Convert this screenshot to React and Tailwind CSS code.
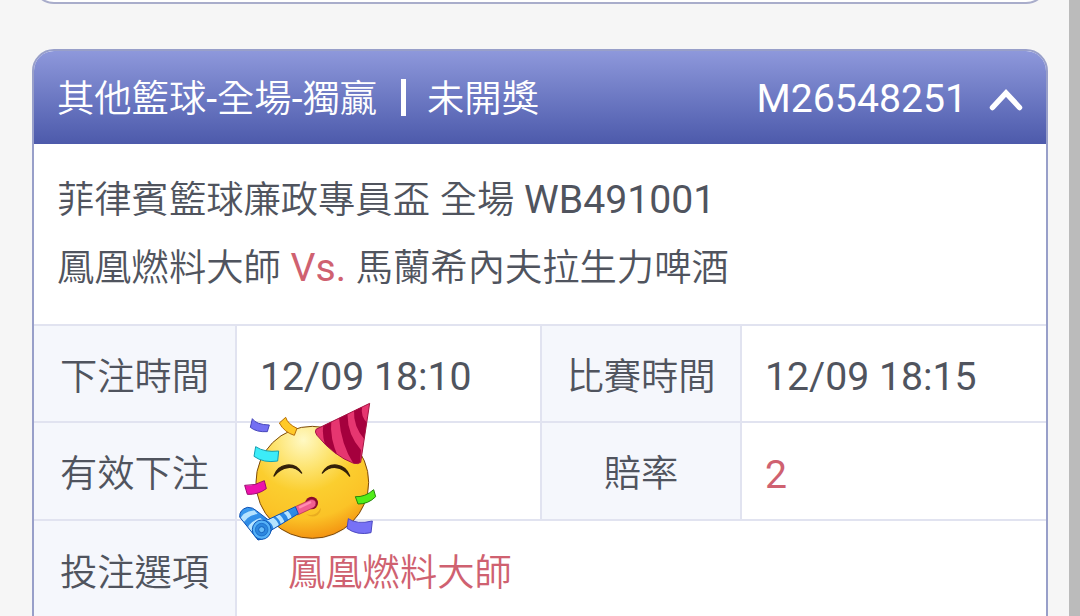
import clsx from 'clsx';

function Latin({ children }) {
  return <span className="text-[39.2px] font-normal">{children}</span>;
}

function LabelCell({ children, className = '' }) {
  return (
    <div className={clsx('flex items-center justify-center bg-[#f5f7fc] border-r-2 border-[#e1e3f0] pt-2', className)}>
      {children}
    </div>
  );
}

function PartyFace() {
  return (
    <svg className="absolute -left-3 -top-7 z-10 w-[165px] h-[155px] max-w-none" viewBox="0 0 495 465">
      <defs>
        <radialGradient id="face" cx="0.42" cy="0.12" r="0.9">
          <stop offset="0" stopColor="#fff9c4" />
          <stop offset="0.28" stopColor="#fde471" />
          <stop offset="0.52" stopColor="#fbce2f" />
          <stop offset="0.78" stopColor="#fbc327" />
          <stop offset="1" stopColor="#f3900f" />
        </radialGradient>
        <linearGradient id="horn" x1="0" y1="0" x2="0.5" y2="1">
          <stop offset="0" stopColor="#3fa2f5" />
          <stop offset="1" stopColor="#1d74d6" />
        </linearGradient>
        <clipPath id="hatClip">
          <path d="M434 25 L273 103 Q268 111 276 121 Q327 183 386 205 Q400 208 407 202 Z" />
        </clipPath>
        <clipPath id="hornClip">
          <path d="M44 366 Q43 343 68 337 Q84 337 94 347 L129 374 L211 335 L220 356 L140 405 Q128 432 99 435 Z" />
        </clipPath>
      </defs>
      <ellipse cx="263" cy="266" rx="168" ry="167" fill="#8a6a20" opacity="0.15" />
      <ellipse cx="262" cy="262" rx="169" ry="168" fill="url(#face)" stroke="#7d4a0b" strokeWidth="3" />
      {/* eyes */}
      <path d="M147 243 C160 205 208 197 230 234 C207 210 172 211 147 243 Z" fill="#33210a" stroke="#33210a" strokeWidth="4" strokeLinejoin="round" />
      <path d="M292 234 C313 197 360 205 374 243 C350 211 316 210 292 234 Z" fill="#33210a" stroke="#33210a" strokeWidth="4" strokeLinejoin="round" />
      {/* hat */}
      <g clipPath="url(#hatClip)">
        <rect x="260" y="15" width="185" height="200" fill="#e63670" />
        <path d="M295 88 L319 76 Q313 130 341 190 L308 170 Q289 128 295 88 Z" fill="#a5003d" />
        <path d="M342 68 L368 54 Q365 115 408 165 L405 206 L388 210 Q348 150 342 68 Z" fill="#a5003d" />
        <path d="M387 44 L412 30 Q405 66 428 84 L420 135 Q384 95 387 44 Z" fill="#a5003d" />
      </g>
      <path d="M434 25 L273 103 Q268 111 276 121 Q327 183 386 205 Q400 208 407 202 Z" fill="none" stroke="#a51443" strokeWidth="3" strokeLinejoin="round" />
      {/* mouth and horn */}
      <path d="M244 358 Q276 366 287 338 Q290 351 278 360 Q261 370 244 358 Z" fill="#e9ac20" />
      <circle cx="260" cy="324" r="19" fill="#8a0b2e" />
      <path d="M211 335 L256 314 Q270 312 273 324 Q273 334 265 338 L218 360 Z" fill="#f25f91" stroke="#a9204c" strokeWidth="2" />
      <path d="M222 338 L258 321" stroke="#ff8db0" strokeWidth="7" />
      <g clipPath="url(#hornClip)">
        <rect x="35" y="325" width="200" height="120" fill="url(#horn)" />
        <path d="M45 377 Q50 351 88 346 L98 357 Q61 363 53 392 Z" fill="#b5e3ff" />
        <path d="M67 409 Q66 383 106 369 L118 378 Q80 391 77 422 Z" fill="#b5e3ff" />
        <path d="M126 376 L143 367 Q160 378 162 394 L146 403 Q143 385 126 376 Z" fill="#b5e3ff" />
        <path d="M150 363 L162 358 Q177 370 178 384 L168 389 Q165 374 150 363 Z" fill="#b5e3ff" />
        <path d="M174 352 L186 346 Q199 358 201 371 L190 377 Q187 361 174 352 Z" fill="#b5e3ff" />
      </g>
      <path d="M44 366 Q43 343 68 337 Q84 337 94 347 L129 374 L211 335 L220 356 L140 405 Q128 432 99 435 Z" fill="none" stroke="#0d50b5" strokeWidth="3" strokeLinejoin="round" />
      <ellipse cx="110" cy="404" rx="28" ry="29" fill="#55b1f7" stroke="#1159b8" strokeWidth="3" />
      <ellipse cx="110" cy="404" rx="19" ry="19" fill="#2c87df" stroke="#1562be" strokeWidth="2" />
      <ellipse cx="110" cy="404" rx="9" ry="9" fill="#66bbf8" stroke="#1562be" strokeWidth="3" />
      {/* confetti */}
      <g strokeWidth="3" strokeLinejoin="round">
        <path d="M82 71 Q93 89 133 90 L127 110 Q94 112 76 97 Z" fill="#736ff2" stroke="#4545ba" />
        <path d="M182 67 Q188 87 216 100 L208 121 Q178 112 163 84 Z" fill="#ffc928" stroke="#b66c08" />
        <path d="M92 155 Q119 173 161 168 L158 198 Q116 205 87 184 Z" fill="#3cecf8" stroke="#129fb2" />
        <path d="M59 271 Q91 273 118 257 L124 281 Q98 300 67 298 Z" fill="#ed12ac" stroke="#9c0870" />
        <path d="M391 305 Q420 307 446 284 L452 305 Q429 328 399 327 Z" fill="#51ed19" stroke="#26850d" />
        <path d="M370 371 Q395 389 442 378 L438 413 Q396 422 366 400 Z" fill="#7771f6" stroke="#4b48c2" />
      </g>
    </svg>
  );
}

function App() {
  return (
    <div className="flex h-[616px] w-[1080px] overflow-hidden bg-[#f6f6f6] font-[Roboto,'Noto_Sans_CJK_TC',sans-serif] text-[37.3px] font-[350] text-[#50545e]">
      <div className="flex-1 pl-8 pr-[21px]">
        {/* bottom edge of the previous ticket */}
        <div className="h-1 overflow-hidden flex items-end">
          <div className="h-16 w-full shrink-0 rounded-[22px] border-2 border-[#a9adcb] bg-white"></div>
        </div>

        <div className="mt-[45px] h-[620px] overflow-hidden rounded-t-[22px] border-2 border-[#989fc9] bg-white">
          <div className="flex h-[93px] items-center justify-between bg-linear-to-b from-[#8e98db] to-[#4d5aab] pl-[23px] pr-[23px] text-white">
            <div className="flex items-center pt-1">
              <span className="whitespace-nowrap">其他籃球<Latin>-</Latin>全場<Latin>-</Latin>獨贏</span>
              <span className="-mt-1 ml-6 mr-[21px] h-[37px] w-[5px] bg-white"></span>
              <span>未開獎</span>
            </div>
            <div className="flex items-center gap-[22px] pt-1">
              <Latin>M26548251</Latin>
              <svg className="h-[23px] w-[34px]" viewBox="0 0 34 23" fill="none">
                <path d="M3.5 19.5 L17 5 L30.5 19.5" stroke="white" strokeWidth="5.5" strokeLinecap="round" />
              </svg>
            </div>
          </div>

          <div className="h-[182px] border-b-2 border-[#e1e3f0] pl-[23px] pt-[22px] leading-[68px] whitespace-nowrap">
            <div className="h-[68px]">菲律賓籃球廉政專員盃<Latin> </Latin>全場<Latin> WB491001</Latin></div>
            <div className="h-[68px]">
              鳳凰燃料大師<Latin> <span className="text-[#cf6170]">Vs.</span> </Latin>馬蘭希內夫拉生力啤酒
            </div>
          </div>

          <div className="grid grid-cols-[203px_305px_200px_1fr] grid-rows-[97px_98px_98px]">
            <LabelCell className="border-b-2">下注時間</LabelCell>
            <div className="flex items-center border-b-2 border-r-2 border-[#e1e3f0] pl-[23px] pt-2 whitespace-nowrap">
              <Latin>12/09 18:10</Latin>
            </div>
            <LabelCell className="border-b-2">比賽時間</LabelCell>
            <div className="flex items-center border-b-2 border-[#e1e3f0] pl-[23px] pt-2 whitespace-nowrap">
              <Latin>12/09 18:15</Latin>
            </div>

            <LabelCell className="border-b-2">有效下注</LabelCell>
            <div className="relative border-b-2 border-r-2 border-[#e1e3f0]">
              <PartyFace />
            </div>
            <LabelCell className="border-b-2">賠率</LabelCell>
            <div className="flex items-center border-b-2 border-[#e1e3f0] pl-[23px] pt-2 text-[#cf6170]">
              <Latin>2</Latin>
            </div>

            <LabelCell>投注選項</LabelCell>
            <div className="col-span-3 flex items-center pl-[51px] pt-2 text-[#cf6170]">鳳凰燃料大師</div>
          </div>
        </div>
      </div>
      <div className="w-[11px] bg-[#bbbbbb]"></div>
    </div>
  );
}

export default App;
